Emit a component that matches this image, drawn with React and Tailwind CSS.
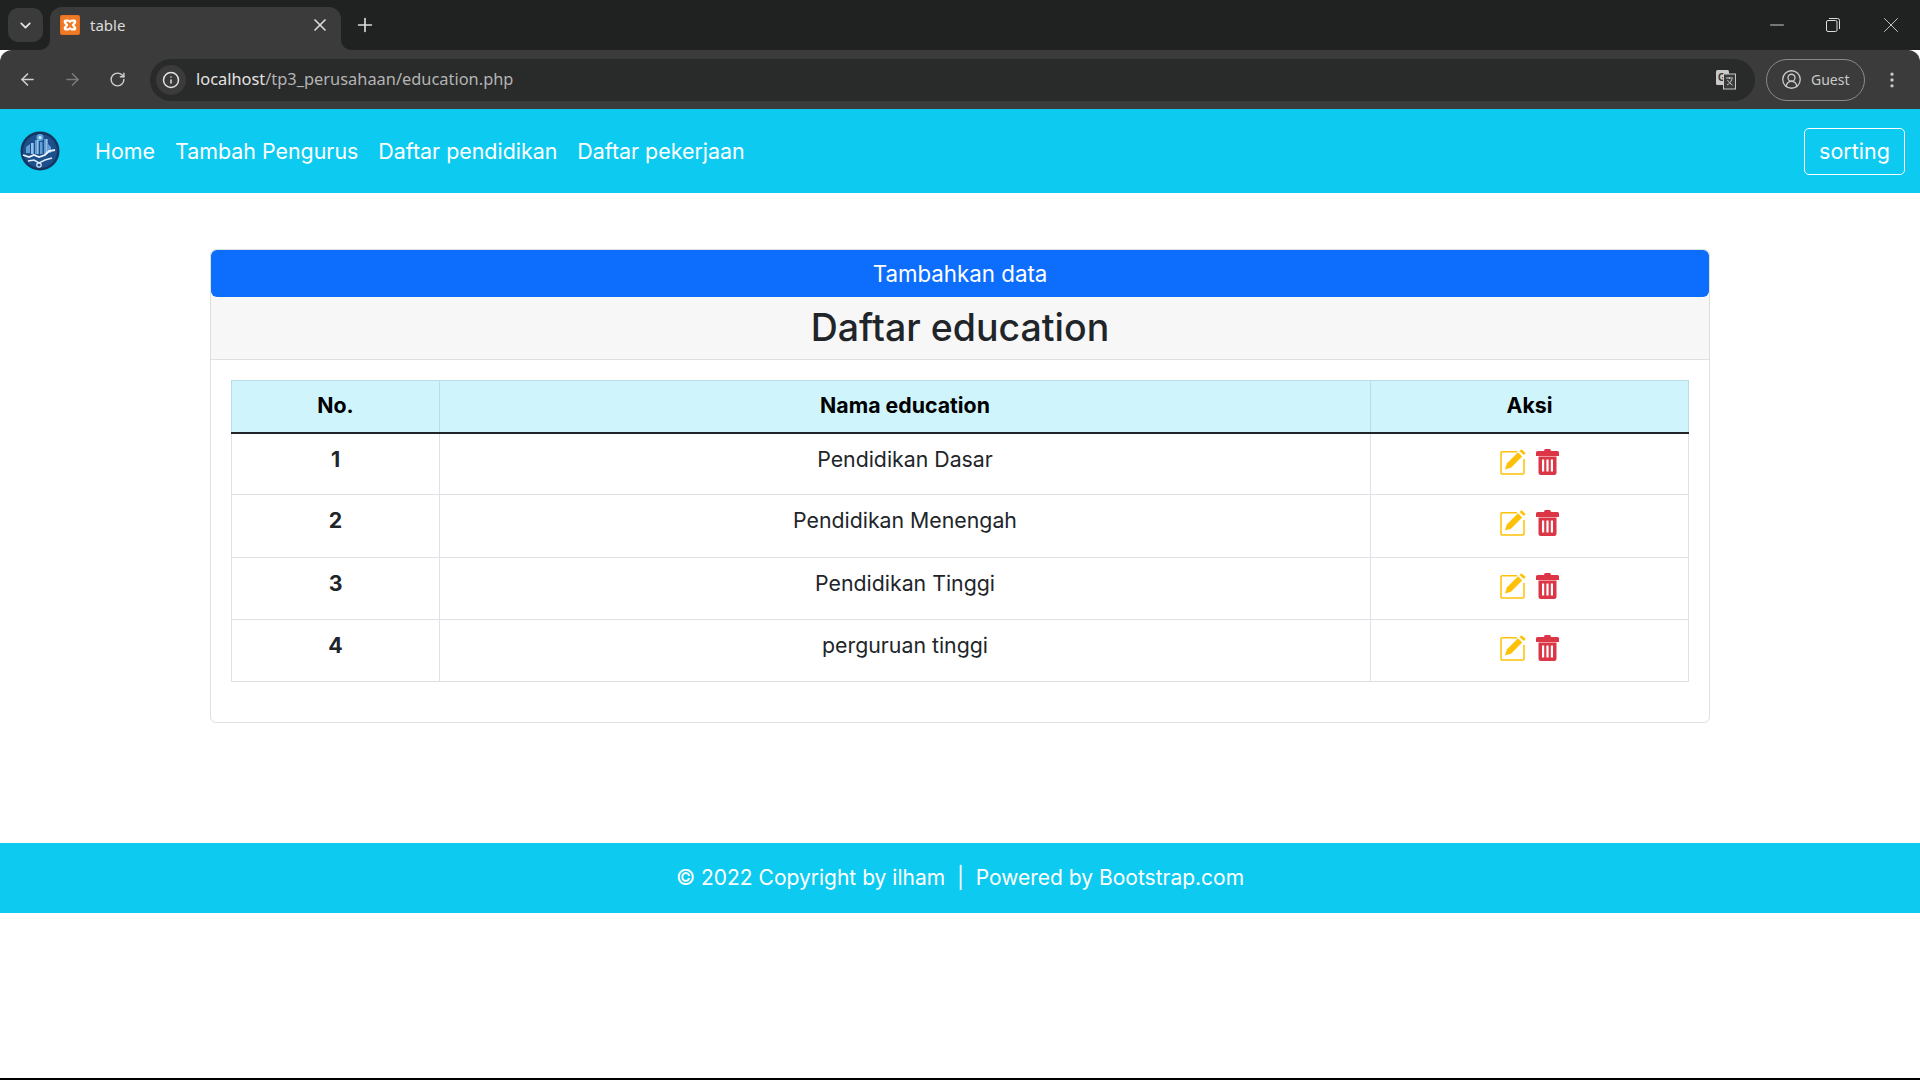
import { ArrowLeft, ArrowRight, RotateCw, Info, Plus, X, ChevronDown, Minus, CircleUserRound, EllipsisVertical } from "lucide-react";

const rows = [
  { no: 1, name: "Pendidikan Dasar", h: "h-[62px]" },
  { no: 2, name: "Pendidikan Menengah", h: "h-[63px]" },
  { no: 3, name: "Pendidikan Tinggi", h: "h-[62px]" },
  { no: 4, name: "perguruan tinggi", h: "h-[62px]" },
];

const links = ["Home", "Tambah Pengurus", "Daftar pendidikan", "Daftar pekerjaan"];

const EditIcon = () => (
  <svg width="26" height="26" viewBox="0 0 26 26" fill="none">
    <path d="M17 2.800H2a1 1 0 0 0-1 1V24a1 1 0 0 0 1 1h21a1 1 0 0 0 1-1V10" stroke="#ffc107" strokeWidth="1.500" />
    <path d="M5 20.500l1.800-6L18 3.300l4.200 4.200L11 18.700z" fill="#ffc107" />
    <path d="M19.500 1.900l2-1.700 4.200 3.800-1.900 2z" fill="#ffc107" />
  </svg>
);

const TrashIcon = () => (
  <svg width="23" height="26" viewBox="0 0 23 26">
    <path d="M8 2l.8-2h5.400l.8 2h6.500a1.500 1.500 0 0 1 1.500 1.500V7H0V3.500A1.500 1.500 0 0 1 1.500 2z" fill="#dc3545" />
    <path fillRule="evenodd" d="M2.500 7.500h18V23.500a2.500 2.500 0 0 1-2.500 2.500H5a2.500 2.500 0 0 1-2.500-2.500zM6 10.500v12h2.200v-12zM10.400 10.500v12h2.200v-12zM14.800 10.500v12H17v-12z" fill="#dc3545" />
  </svg>
);

const Logo = () => (
  <svg width="40" height="40" viewBox="0 0 40 40">
    <circle cx="20" cy="20" r="19.500" fill="#16365f" />
    <circle cx="20" cy="20" r="17" fill="#1d4f8c" />
    <circle cx="20" cy="6.500" r="3.500" fill="#5aa7e0" />
    <circle cx="20" cy="6.500" r="1.500" fill="#d5ebf9" />
    <path d="M6 22V16l4-3v9zM11 23V12h3v11zM15 23V9h3v14zM20 23V11h2.500v12zM24 23V8h3v15zM28 22V13l3 3v6z" fill="#5f9fd6" />
    <path d="M12 23V12M18 23V9M27 23V8" stroke="#c5e1f5" strokeWidth="1" />
    <path d="M3 24l6 2 5-2 5 2 6-2 4-4 6-1" stroke="#eef6fc" strokeWidth="1.800" fill="none" />
    <path d="M8 30l6-1 5 3 6-3 7-2" stroke="#dcecf8" strokeWidth="1.500" fill="none" />
    <circle cx="19" cy="34" r="2.200" fill="none" stroke="#dcecf8" strokeWidth="1.200" />
  </svg>
);

const Favicon = () => (
  <svg width="20" height="20" viewBox="0 0 20 20">
    <rect width="20" height="20" rx="2" fill="#e8701f" />
    <rect x="1" y="1" width="18" height="18" rx="1.500" fill="#ee7a26" />
    <path d="M5.500 4.500h2.800c1 0 1.700.8 1.700 1.500 0-.7.700-1.500 1.700-1.500h2.800c1.200 0 1.800 1 1.800 2.200 0 1.300-.7 2-2 3.300 1.300 1.300 2 2 2 3.300 0 1.200-.6 2.200-1.800 2.200h-2.800c-1 0-1.700-.8-1.700-1.500 0 .7-.7 1.500-1.700 1.500H5.500c-1.200 0-1.800-1-1.800-2.200 0-1.300.7-2 2-3.300-1.300-1.300-2-2-2-3.300 0-1.200.6-2.200 1.800-2.200z" fill="#fff" />
    <path d="M6.500 6.800h2.200L10 8.300l1.300-1.500h2.200v.6L11.600 10l1.900 2.600v.6h-2.200L10 11.700l-1.300 1.500H6.500v-.6L8.400 10 6.500 7.400z" fill="#ee7a26" />
  </svg>
);

const TranslateIcon = () => (
  <svg width="22" height="22" viewBox="0 0 22 22">
    <rect x="1" y="1" width="13" height="15" rx="1.500" fill="#c9c9c9" />
    <text x="3" y="12" fontSize="10" fontWeight="700" fill="#333" fontFamily="Liberation Sans">G</text>
    <rect x="8.500" y="5" width="12" height="15" fill="#3a3a3a" stroke="#c9c9c9" strokeWidth="1" />
    <path d="M11 9h7M14.500 8v2M17 10c-1 3-3 5-5 6M12.500 11c1 2 3 4 5 5" stroke="#c9c9c9" strokeWidth="1" fill="none" />
  </svg>
);

export default function App() {
  return (
    <div className="flex flex-col h-[1080px] bg-white text-[#212529] font-['Inter',sans-serif]">
      {/* tab strip */}
      <div className="flex items-end h-[50px] shrink-0 bg-[#202221] pl-[8px]">
        <div className="self-start mt-2 mr-[7px] flex items-center justify-center w-[35px] h-[34px] rounded-[10px] bg-[#3b3b3b] text-[#e3e3e3]">
          <ChevronDown size={17} strokeWidth={2.500} />
        </div>
        <div className="relative flex items-center w-[291px] h-[43px] rounded-t-xl bg-[#3b3b3b] pl-[10px] pr-[11px] pb-[7px]">
          <div className="absolute left-[-10px] bottom-0 w-[10px] h-[10px] bg-[#3b3b3b]">
            <div className="w-full h-full rounded-br-[10px] bg-[#202221]" />
          </div>
          <Favicon />
          <span className="ml-[10px] grow text-[15px] text-[#dcdcdc] font-['Noto_Sans',sans-serif]">table</span>
          <X size={20} strokeWidth={2} className="text-[#dcdcdc]" />
          <div className="absolute right-[-10px] bottom-0 w-[10px] h-[10px] bg-[#3b3b3b]">
            <div className="w-full h-full rounded-bl-[10px] bg-[#202221]" />
          </div>
        </div>
        <div className="self-start mt-[14px] ml-[13px] text-[#dcdcdc]">
          <Plus size={22} strokeWidth={1.800} />
        </div>
        <div className="ml-auto self-start mt-[12px] flex items-center text-[#dcdcdc]">
          <Minus size={22} strokeWidth={1} className="mr-[38px]" />
          <svg width="14" height="14" viewBox="0 0 14 14" fill="none" stroke="#dcdcdc" className="mr-[38px]">
            <rect x="0.500" y="2.500" width="10.500" height="11" rx="1.500" />
            <path d="M3 0.500h8.500a2 2 0 0 1 2 2V11" />
          </svg>
          <X size={26} strokeWidth={0.800} className="mr-[16px]" />
        </div>
      </div>

      {/* address bar */}
      <div className="flex items-center h-[59px] shrink-0 rounded-t-xl bg-[#3b3b3b] pl-[18px] pr-[18px]">
        <ArrowLeft size={19} className="text-[#d0d0d0]" />
        <ArrowRight size={19} className="ml-[26px] text-[#7b7b7b]" />
        <RotateCw size={17} className="ml-[27px] text-[#d0d0d0]" />
        <div className="ml-[24px] flex items-center grow h-[42px] rounded-full bg-[#292a2a] pl-[6px] pr-[18px]">
          <div className="flex items-center justify-center w-[30px] h-[30px] rounded-full bg-[#3b3b3b] text-[#e3e3e3]">
            <Info size={18} />
          </div>
          <span className="ml-[10px] grow text-[16.400px] font-['Noto_Sans',sans-serif] text-[#e3e3e3]">
            localhost<span className="text-[#b4b4b4]">/tp3_perusahaan/education.php</span>
          </span>
          <TranslateIcon />
        </div>
        <div className="ml-[11px] flex items-center w-[99px] h-[42px] rounded-full border border-[#8a8a8a] pl-[14px] text-[#c9c9c9]">
          <CircleUserRound size={21} strokeWidth={1.500} />
          <span className="ml-[9px] text-[14px] font-['Noto_Sans',sans-serif]">Guest</span>
        </div>
        <EllipsisVertical size={20} className="ml-[17px] text-[#c9c9c9]" />
      </div>

      {/* navbar */}
      <nav className="flex items-center h-[84px] shrink-0 bg-[#0dcaf0] pl-[20px] pr-[15px] text-white">
        <Logo />
        <div className="ml-[35px] flex gap-[20px] text-[21.400px] font-normal">
          {links.map((l) => (
            <a key={l}>{l}</a>
          ))}
        </div>
        <button className="ml-auto w-[101px] h-[47px] rounded-[5px] border border-white text-[21.500px] text-center">
          sorting
        </button>
      </nav>

      {/* card */}
      <div className="mx-[210px] mt-[56px] h-[474px] shrink-0 rounded-[6px] border border-[#dfdfdf]">
        <button className="block w-full h-[47px] rounded-[6px] bg-[#0d6efd] text-white text-[22.300px] text-center">
          Tambahkan data
        </button>
        <div className="flex items-center justify-center h-[63px] bg-[#f7f7f7] border-b border-[#dfdfdf] text-[37.500px] font-medium">
          Daftar education
        </div>
        <div className="px-[20px] pt-[20px]">
          <table className="w-full table-fixed border-collapse text-[21.300px]">
            <thead>
              <tr className="h-[52px] bg-[#cff4fc] text-black font-bold border-b-2 border-b-[#212529]">
                <th className="w-[208px] border border-[#badce3] border-b-[#212529] border-b-2">No.</th>
                <th className="border border-[#badce3] border-b-[#212529] border-b-2">Nama education</th>
                <th className="w-[318px] border border-[#badce3] border-b-[#212529] border-b-2">Aksi</th>
              </tr>
            </thead>
            <tbody>
              {rows.map((r) => (
                <tr key={r.no} className={r.h}>
                  <td className="border border-[#dee2e6] align-top pt-[10px] text-center font-bold">{r.no}</td>
                  <td className="border border-[#dee2e6] align-top pt-[10px] text-center">{r.name}</td>
                  <td className="border border-[#dee2e6] align-top pt-[15px]">
                    <div className="flex justify-center gap-[10px]">
                      <EditIcon />
                      <TrashIcon />
                    </div>
                  </td>
                </tr>
              ))}
            </tbody>
          </table>
        </div>
      </div>

      <div className="h-[120px] shrink-0" />

      {/* footer */}
      <footer className="flex items-center justify-center h-[70px] shrink-0 bg-[#0dcaf0] text-white text-[21px]">
        © 2022 Copyright by ilham &nbsp;|&nbsp; Powered by Bootstrap.com
      </footer>

      <div className="grow" />
      <div className="h-[2px] shrink-0 bg-black" />
    </div>
  );
}
